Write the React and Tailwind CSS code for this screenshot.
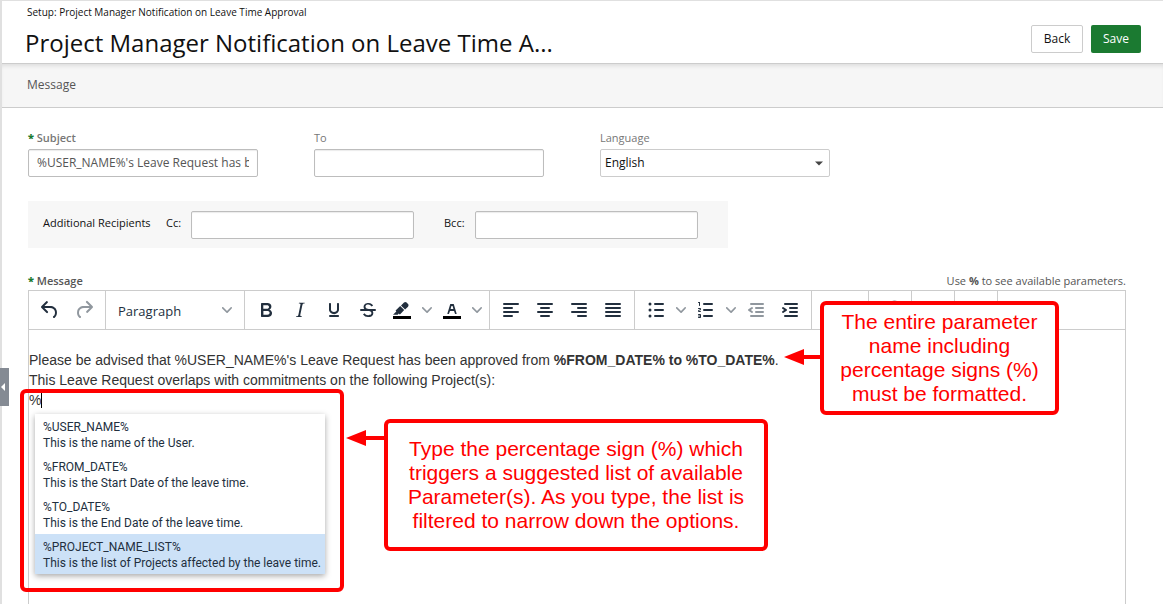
import React from "react";
import { Link } from "lucide-react";

const ICONS = {
  undo: [
    "M6.4 8H12c3.7 0 6.2 2 6.8 5.1.6 2.7-.4 5.6-2.3 6.8a1 1 0 0 1-1-1.8c1.1-.6 1.8-2.7 1.4-4.6-.5-2.1-2.1-3.5-4.9-3.5H6.4l3.3 3.3a1 1 0 1 1-1.4 1.4l-5-5a1 1 0 0 1 0-1.4l5-5a1 1 0 0 1 1.4 1.4L6.4 8Z",
  ],
  redo: [
    "M17.6 10H12c-2.8 0-4.4 1.4-4.9 3.5-.4 2 .3 4 1.4 4.6a1 1 0 1 1-1 1.8c-2-1.2-2.9-4.1-2.3-6.8.6-3 3-5.1 6.8-5.1h5.6l-3.3-3.3a1 1 0 1 1 1.4-1.4l5 5a1 1 0 0 1 0 1.4l-5 5a1 1 0 0 1-1.4-1.4l3.3-3.3Z",
  ],
  bold: [
    "M7.8 19c-.3 0-.5 0-.6-.2l-.2-.5V5.7c0-.2 0-.4.2-.5l.6-.2h5c1.5 0 2.7.3 3.5 1 .7.6 1.1 1.4 1.1 2.5a3 3 0 0 1-.6 1.9c-.4.6-1 1-1.6 1.2.4.1.9.3 1.3.6s.8.7 1 1.2c.4.4.5 1 .5 1.6 0 1.3-.4 2.3-1.3 3-.8.7-2.1 1-3.8 1H7.8Zm5-8.3c.6 0 1.2-.1 1.6-.5.4-.3.6-.7.6-1.3 0-1.1-.8-1.7-2.3-1.7H9.3v3.5h3.4Zm.5 6c.7 0 1.3-.1 1.7-.4.4-.4.6-.9.6-1.5s-.2-1-.7-1.4c-.4-.3-1-.4-2-.4H9.4v3.8h4Z",
  ],
  italic: [
    "m16.7 4.7-.1.9h-.3c-.6 0-1 0-1.4.3-.3.3-.4.6-.5 1.1l-2.1 9.8v.6c0 .5.4.8 1.4.8h.2l-.2.8H8l.2-.8h.2c1.1 0 1.8-.5 2-1.5l2-9.8.1-.5c0-.6-.4-.8-1.4-.8h-.3l.2-.9h5.8Z",
  ],
  underline: [
    "M16 5c.6 0 1 .4 1 1v5.5a4 4 0 0 1-.4 1.8l-1 1.4a5.3 5.3 0 0 1-5.5 1 5 5 0 0 1-1.6-1c-.5-.4-.8-.9-1.1-1.4a4 4 0 0 1-.4-1.8V6c0-.6.4-1 1-1s1 .4 1 1v5.5c0 .3 0 .6.2 1l.6.7a3.3 3.3 0 0 0 2.2.8 3.4 3.4 0 0 0 2.2-.8c.3-.2.4-.5.6-.8l.2-.9V6c0-.6.4-1 1-1ZM8 17h8c.6 0 1 .4 1 1s-.4 1-1 1H8a1 1 0 0 1 0-2Z",
  ],
  strike: [
    "M15.6 8.5c-.5-.7-1-1.1-1.3-1.3-.6-.4-1.3-.6-2-.6-2.7 0-2.8 1.7-2.8 2.1 0 1.6 1.8 2 3.2 2.3 4.4.9 4.6 2.8 4.6 3.9 0 1.4-.7 4.1-5 4.1A6.2 6.2 0 0 1 7 16.4l1.5-1.1c.4.6 1.6 2 3.7 2 1.6 0 2.5-.4 3-1.2.4-.8.3-2-.8-2.6-.7-.4-1.6-.7-2.9-1-1-.2-3.9-.8-3.9-3.6C7.6 6 10.3 5 12.4 5c2.9 0 4.2 1.6 4.7 2.4l-1.5 1.1Z",
    "M5 11h14a1 1 0 0 1 0 2H5a1 1 0 0 1 0-2Z",
  ],
  highlight: [
    "M7.7 16.7H3l3.3-3.3-.7-.8L10.2 8l4 4.1-4 4.2c-.2.2-.6.2-.8 0l-.6-.7-1.1 1.1zm5-7.5L11 7.4l3-2.9a2 2 0 0 1 2.6 0L18 6c.7.7.7 2 0 2.7l-2.9 2.9-1.8-1.8-.5-.6",
  ],
  textColor: [
    "M8.7 16h-.8a.5.5 0 0 1-.5-.6l2.7-9c.1-.3.3-.4.5-.4h2.8c.2 0 .4.1.5.4l2.7 9a.5.5 0 0 1-.5.6h-.8a.5.5 0 0 1-.4-.4l-.7-2.2c0-.3-.3-.4-.5-.4h-3.4c-.2 0-.4.1-.5.4l-.7 2.2c0 .3-.2.4-.4.4Zm2.6-7.6-.6 2a.5.5 0 0 0 .5.6h1.6a.5.5 0 0 0 .5-.6l-.6-2c0-.3-.3-.4-.5-.4h-.4c-.2 0-.4.1-.5.4Z",
  ],
  alignLeft: [
    "M5 5h14a1 1 0 0 1 0 2H5a1 1 0 1 1 0-2Zm0 4h8a1 1 0 0 1 0 2H5a1 1 0 1 1 0-2Zm0 4h14a1 1 0 0 1 0 2H5a1 1 0 0 1 0-2Zm0 4h8a1 1 0 0 1 0 2H5a1 1 0 0 1 0-2Z",
  ],
  alignCenter: [
    "M5 5h14a1 1 0 0 1 0 2H5a1 1 0 1 1 0-2Zm3 4h8a1 1 0 0 1 0 2H8a1 1 0 1 1 0-2Zm-3 4h14a1 1 0 0 1 0 2H5a1 1 0 0 1 0-2Zm3 4h8a1 1 0 0 1 0 2H8a1 1 0 0 1 0-2Z",
  ],
  alignRight: [
    "M5 5h14a1 1 0 0 1 0 2H5a1 1 0 1 1 0-2Zm6 4h8a1 1 0 0 1 0 2h-8a1 1 0 0 1 0-2Zm-6 4h14a1 1 0 0 1 0 2H5a1 1 0 0 1 0-2Zm6 4h8a1 1 0 0 1 0 2h-8a1 1 0 0 1 0-2Z",
  ],
  justify: [
    "M5 5h14a1 1 0 0 1 0 2H5a1 1 0 1 1 0-2Zm0 4h14a1 1 0 0 1 0 2H5a1 1 0 1 1 0-2Zm0 4h14a1 1 0 0 1 0 2H5a1 1 0 0 1 0-2Zm0 4h14a1 1 0 0 1 0 2H5a1 1 0 0 1 0-2Z",
  ],
  bullets: [
    "M11 5h8a1 1 0 0 1 0 2h-8a1 1 0 0 1 0-2Zm0 6h8a1 1 0 0 1 0 2h-8a1 1 0 0 1 0-2Zm0 6h8a1 1 0 0 1 0 2h-8a1 1 0 0 1 0-2Z",
    "M6 4.5a1.5 1.5 0 1 1 0 3a1.5 1.5 0 0 1 0-3Zm0 6a1.5 1.5 0 1 1 0 3a1.5 1.5 0 0 1 0-3Zm0 6a1.5 1.5 0 1 1 0 3a1.5 1.5 0 0 1 0-3Z",
  ],
  numbers: [
    "M10 17h8a1 1 0 0 1 0 2h-8a1 1 0 0 1 0-2Zm0-6h8a1 1 0 0 1 0 2h-8a1 1 0 0 1 0-2Zm0-6h8a1 1 0 0 1 0 2h-8a1 1 0 1 1 0-2ZM6 4v3.5c0 .3-.2.5-.5.5a.5.5 0 0 1-.5-.5V5h-.5a.5.5 0 0 1 0-1H6Zm-1 8.8.2.2h1.3c.3 0 .5.2.5.5s-.2.5-.5.5H4.9a1 1 0 0 1-.9-1V13c0-.4.3-.8.6-1l1.2-.4.2-.3a.2.2 0 0 0-.2-.2H4.5a.5.5 0 0 1-.5-.5c0-.3.2-.5.5-.5h1.6c.5 0 .9.4.9 1v.1c0 .4-.3.8-.6 1l-1.2.4-.2.3ZM7 17v2c0 .6-.4 1-1 1H4.5a.5.5 0 0 1 0-1h1.2c.2 0 .3-.1.3-.3 0-.2-.1-.3-.3-.3H4.4a.4.4 0 1 1 0-.8h1.3c.2 0 .3-.1.3-.3 0-.2-.1-.3-.3-.3H4.5a.5.5 0 1 1 0-1H6c.6 0 1 .4 1 1Z",
  ],
  outdent: [
    "M7 5h12a1 1 0 0 1 0 2H7a1 1 0 1 1 0-2Zm5 4h7a1 1 0 0 1 0 2h-7a1 1 0 0 1 0-2Zm0 4h7a1 1 0 0 1 0 2h-7a1 1 0 0 1 0-2Zm-5 4h12a1 1 0 0 1 0 2H7a1 1 0 0 1 0-2Zm1.6-3.8a1 1 0 0 1-1.2 1.6l-3-2a1 1 0 0 1 0-1.6l3-2a1 1 0 0 1 1.2 1.6L6.8 12l1.8 1.2Z",
  ],
  indent: [
    "M7 5h12a1 1 0 0 1 0 2H7a1 1 0 1 1 0-2Zm5 4h7a1 1 0 0 1 0 2h-7a1 1 0 0 1 0-2Zm0 4h7a1 1 0 0 1 0 2h-7a1 1 0 0 1 0-2Zm-5 4h12a1 1 0 0 1 0 2H7a1 1 0 0 1 0-2Zm-2.6-3.8L6.2 12l-1.8-1.2a1 1 0 0 1 1.2-1.6l3 2a1 1 0 0 1 0 1.6l-3 2a1 1 0 1 1-1.2-1.6Z",
  ],
};

function ToolButton({ icon, label, disabled, swatch }) {
  return (
    <button
      type="button"
      aria-label={label}
      disabled={disabled}
      className={
        "flex h-[34px] w-[34px] shrink-0 items-center justify-center " +
        (disabled ? "text-[#222f3e]/50" : "text-[#222f3e]")
      }
    >
      <svg width="24" height="24" viewBox="0 0 24 24" fill="currentColor" aria-hidden="true">
        {swatch && <path d="M3 18h18v3H3z" fill="#000" />}
        {ICONS[icon].map((d) => (
          <path key={d} d={d} />
        ))}
      </svg>
    </button>
  );
}

function Chevron() {
  return (
    <svg width="10" height="10" viewBox="0 0 10 10" fill="#222f3e" fillOpacity="0.5" aria-hidden="true">
      <path d="M8.7 2.2c.3-.3.8-.3 1 0 .4.4.4.9 0 1.2L5.7 7.8c-.3.3-.9.3-1.2 0L.2 3.4a.8.8 0 0 1 0-1.2c.3-.3.8-.3 1.1 0L5 6l3.7-3.8Z" />
    </svg>
  );
}

function SplitButton({ icon, label, swatch }) {
  return (
    <div className="flex shrink-0">
      <ToolButton icon={icon} label={label} swatch={swatch} />
      <button type="button" aria-label={label + " options"} className="flex h-[34px] w-4 items-center justify-center">
        <Chevron />
      </button>
    </div>
  );
}

function Group({ children }) {
  return <div className="flex shrink-0 items-center border-r border-[#ccc] px-1">{children}</div>;
}

const inputClass =
  "h-7 rounded-xs border border-[#bdbdbd] bg-white px-2 pb-0.5 text-xs text-[#555] shadow-[inset_0_1px_1px_rgba(0,0,0,0.08)]";

const calloutClass =
  "absolute flex items-center justify-center rounded-md border-4 border-[#f00] bg-white text-center font-['Liberation_Sans',Arial,sans-serif] text-[21px] leading-6 text-[#f00]";

const PARAMETERS = [
  ["%USER_NAME%", "This is the name of the User."],
  ["%FROM_DATE%", "This is the Start Date of the leave time."],
  ["%TO_DATE%", "This is the End Date of the leave time."],
  ["%PROJECT_NAME_LIST%", "This is the list of Projects affected by the leave time."],
];

function Arrow({ className }) {
  return (
    <svg className={className} width="38" height="18" viewBox="0 0 38 18" fill="#f00" aria-hidden="true">
      <path d="M0 9 20 1v6h18v4H20v6Z" />
    </svg>
  );
}

export default function App() {
  return (
    <div className="relative flex h-screen flex-col border-t border-l-2 border-[#e0e0e0] bg-white font-['Open_Sans','Noto_Sans',sans-serif] text-xs text-[#111]">
      <header className="flex h-[63px] shrink-0 items-start justify-between border-b border-[#ccc] pr-[22px] pl-[23px]">
        <div className="min-w-0">
          <p className="mt-[3px] ml-0.5 text-[10px] leading-4">Setup: Project Manager Notification on Leave Time Approval</p>
          <h1 className="mt-[3px] truncate text-2xl leading-10">Project Manager Notification on Leave Time A...</h1>
        </div>
        <div className="mt-6 flex gap-2">
          <button type="button" className="h-7 w-[52px] rounded-xs border border-[#ccc] bg-white text-xs">
            Back
          </button>
          <button type="button" className="h-7 w-[50px] rounded-xs bg-[#1b7a31] text-xs text-white">
            Save
          </button>
        </div>
      </header>

      <nav className="flex h-11 shrink-0 items-center border-b border-[#ccc] bg-[#f6f6f6] px-[25px] pb-0.5 shadow-[inset_0_4px_4px_-2px_rgba(0,0,0,0.1)]">
        <a href="#message" className="text-xs text-[#555]">
          Message
        </a>
      </nav>

      <main className="flex min-h-0 flex-1 flex-col overflow-hidden pt-[22px] pr-[37px] pl-[26px]">
        <div className="flex gap-14">
          <div className="flex w-[230px] flex-col gap-[3px]">
            <label htmlFor="subject" className="text-[11px] leading-4 font-semibold text-[#777]">
              <span className="font-extrabold text-[#1b7a31]">*</span> Subject
            </label>
            <input id="subject" defaultValue="%USER_NAME%'s Leave Request has been approved" className={inputClass} />
          </div>
          <div className="flex w-[230px] flex-col gap-[3px]">
            <label htmlFor="to" className="text-[11px] leading-4 text-[#777]">
              To
            </label>
            <input id="to" className={inputClass} />
          </div>
          <div className="flex w-[230px] flex-col gap-[3px]">
            <label htmlFor="language" className="text-[11px] leading-4 text-[#777]">
              Language
            </label>
            <div className="relative">
              <select
                id="language"
                className="h-7 w-full appearance-none rounded-xs border border-[#ccc] bg-white pl-1 text-xs text-[#111]"
              >
                <option>English</option>
              </select>
              <svg className="pointer-events-none absolute top-3 right-[7px]" width="8" height="5" viewBox="0 0 8 5" fill="#444" aria-hidden="true">
                <path d="M0 .5h8L4 4.5Z" />
              </svg>
            </div>
          </div>
        </div>

        <fieldset className="mt-6 flex h-[47px] w-[700px] items-start bg-[#f7f7f7] pt-[10px] pl-[15px] text-[11px]">
          <span className="w-[123px] leading-6">Additional Recipients</span>
          <label htmlFor="cc" className="w-[25px] leading-6">
            Cc:
          </label>
          <input id="cc" className={inputClass + " w-[223px]"} />
          <label htmlFor="bcc" className="ml-[30px] w-[31px] leading-6">
            Bcc:
          </label>
          <input id="bcc" className={inputClass + " w-[223px]"} />
        </fieldset>

        <div className="mt-[25px] flex justify-between text-[11px] leading-4 text-[#555]">
          <span id="message-label" className="font-semibold">
            <span className="font-extrabold text-[#1b7a31]">*</span> Message
          </span>
          <span>
            Use <b>%</b> to see available parameters.
          </span>
        </div>

        <div className="mt-px flex min-h-0 flex-1 flex-col border border-b-0 border-[#ccc]">
          <div role="toolbar" aria-label="Formatting" className="flex h-[39px] shrink-0 overflow-hidden border-b border-[#ccc]">
            <Group>
              <ToolButton icon="undo" label="Undo" />
              <ToolButton icon="redo" label="Redo" disabled />
            </Group>
            <Group>
              <button type="button" className="flex h-[34px] w-[130px] items-center justify-between px-2 text-[13px] text-[#222f3e]">
                <span className="pt-1">Paragraph</span>
                <Chevron />
              </button>
            </Group>
            <Group>
              <ToolButton icon="bold" label="Bold" />
              <ToolButton icon="italic" label="Italic" />
              <ToolButton icon="underline" label="Underline" />
              <ToolButton icon="strike" label="Strikethrough" />
              <SplitButton icon="highlight" label="Background color" swatch />
              <SplitButton icon="textColor" label="Text color" swatch />
            </Group>
            <Group>
              <ToolButton icon="alignLeft" label="Align left" />
              <ToolButton icon="alignCenter" label="Align center" />
              <ToolButton icon="alignRight" label="Align right" />
              <ToolButton icon="justify" label="Justify" />
            </Group>
            <Group>
              <SplitButton icon="bullets" label="Bullet list" />
              <SplitButton icon="numbers" label="Numbered list" />
              <ToolButton icon="outdent" label="Decrease indent" disabled />
              <ToolButton icon="indent" label="Increase indent" />
            </Group>
            <Group>
              <div className="w-12" />
            </Group>
            <Group>
              <button type="button" aria-label="Link" className="flex h-[34px] w-[34px] items-center justify-center text-[#222f3e]/50">
                <Link size={22} strokeWidth={1} />
              </button>
            </Group>
            <Group>
              <div className="w-[34px]" />
            </Group>
            <Group>
              <div className="w-[34px]" />
            </Group>
          </div>
          <div
            role="textbox"
            aria-multiline="true"
            aria-labelledby="message-label"
            contentEditable
            suppressContentEditableWarning
            className="flex-1 pt-5 font-['Liberation_Sans',Arial,sans-serif] text-sm leading-5 text-[#333] outline-none"
          >
            <p>
              Please be advised that %USER_NAME%'s Leave Request has been approved from <b>%FROM_DATE% to %TO_DATE%</b>.
            </p>
            <p>This Leave Request overlaps with commitments on the following Project(s):</p>
            <p>
              <span className="border-r border-black">%</span>
            </p>
          </div>
        </div>
      </main>

      <button
        type="button"
        aria-label="Expand panel"
        className="absolute top-[367px] -left-0.5 flex h-[38px] w-[9px] items-center bg-[#848a93]"
      >
        <svg width="5" height="8" viewBox="0 0 5 8" fill="#fff" aria-hidden="true">
          <path d="M5 0v8L1 4Z" />
        </svg>
      </button>

      <div className="absolute top-[388px] left-[18px] h-[203px] w-[324px] rounded-md border-4 border-[#f00]" />
      <ul
        role="listbox"
        aria-label="Parameters"
        className="absolute top-[413px] left-[33px] w-[290px] bg-white font-[Roboto,'Open_Sans',sans-serif] text-xs leading-4 whitespace-nowrap text-[#222f3e] shadow-[0_2px_6px_rgba(0,0,0,0.35)]"
      >
        {PARAMETERS.map(([name, text], i) => (
          <li
            key={name}
            role="option"
            aria-selected={i === 3}
            className={"pt-[5px] pr-1 pb-[3px] pl-2 " + (i === 3 ? "bg-[#cce1f7]" : "")}
          >
            <div>{name}</div>
            <div>{text}</div>
          </li>
        ))}
      </ul>

      <Arrow className="absolute top-[428px] left-[344px]" />
      <div className={calloutClass + " top-[418px] left-[382px] h-[132px] w-[384px]"}>
        <p>
          Type the percentage sign (%) which
          <br />
          triggers a suggested list of available
          <br />
          Parameter(s). As you type, the list is
          <br />
          filtered to narrow down the options.
        </p>
      </div>

      <Arrow className="absolute top-[347px] left-[782px]" />
      <div className={calloutClass + " top-[300px] left-[818px] h-[114px] w-[239px]"}>
        <p>
          The entire parameter
          <br />
          name including
          <br />
          percentage signs (%)
          <br />
          must be formatted.
        </p>
      </div>
    </div>
  );
}
